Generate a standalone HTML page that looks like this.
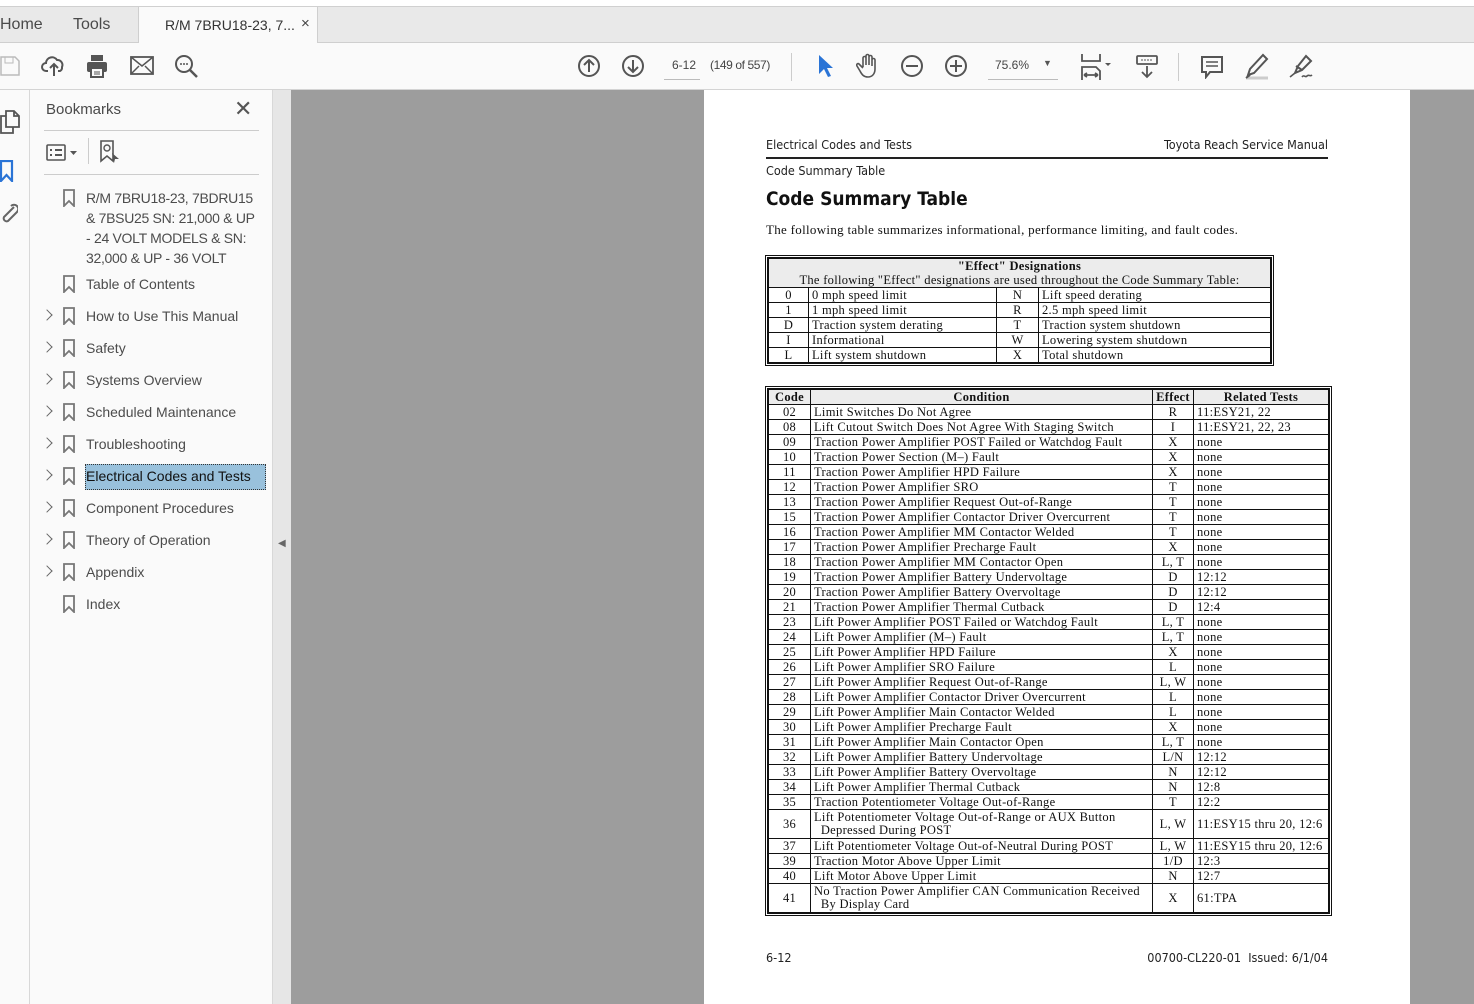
<!DOCTYPE html>
<html><head><meta charset="utf-8">
<style>
*{box-sizing:border-box;margin:0;padding:0}
body{width:1474px;height:1004px;overflow:hidden;background:#9d9d9d;font-family:"Liberation Sans",sans-serif;position:relative}
.abs{position:absolute}
#top{left:0;top:0;width:1474px;height:7px;background:#fff;border-bottom:1px solid #d0d0d0}
#tabs{left:0;top:7px;width:1474px;height:36px;background:#e9e9e9;border-bottom:1px solid #cfcfcf}
.tabt{position:absolute;top:9px;font-size:16px;color:#4a4a4a}
#tab{left:138px;top:7px;width:180px;height:37px;background:#fafafa;border-left:1px solid #cfcfcf;border-right:1px solid #cfcfcf}
#tb{left:0;top:43px;width:1474px;height:47px;background:#fafafa;border-bottom:1px solid #d4d4d4}
svg{position:absolute}
#rail{left:0;top:90px;width:30px;height:914px;background:#fafafa;border-right:1px solid #d8d8d8}
#panel{left:30px;top:90px;width:242px;height:914px;background:#fafafa}
#coll{left:272px;top:90px;width:19px;height:914px;background:#e6e6e6;border-left:1px solid #d8d8d8}
.bm{position:absolute;left:86px;font-size:14px;color:#4c4c4c;line-height:20px;font-family:"Liberation Sans",sans-serif;white-space:nowrap}
.chev{position:absolute;left:43px;width:8px;height:8px;border-right:1.5px solid #666;border-top:1.5px solid #666;transform:rotate(45deg)}
.bi{position:absolute;left:63px}
#page{left:704px;top:90px;width:706px;height:914px;background:#fff}
.s{font-family:"DejaVu Sans Condensed","Liberation Sans Narrow","Liberation Sans",sans-serif}
table{border-collapse:collapse;font-family:"Liberation Serif",serif;font-size:12.5px;letter-spacing:0.3px;table-layout:fixed;color:#111}
td,th{border:1px solid #111;padding:0 3px;height:15px;line-height:13px;white-space:nowrap;overflow:hidden;vertical-align:middle}
.c{text-align:center}
</style></head><body>
<div id="top" class="abs"></div>
<div id="tabs" class="abs">
 <span class="tabt" style="left:0">Home</span>
 <span class="tabt" style="left:73px">Tools</span>
</div>
<div id="tab" class="abs"><span style="position:absolute;left:26px;top:10px;font-size:14px;color:#333">R/M 7BRU18-23, 7...</span><span style="position:absolute;left:162px;top:8px;font-size:15px;color:#444">×</span></div>
<div id="tb" class="abs">
 <svg style="left:0;top:12px" width="20" height="22" viewBox="0 0 20 22"><path d="M1 2h14l4 4v14H1z" fill="none" stroke="#bbb" stroke-width="1.5"/><rect x="5" y="2" width="8" height="6" fill="none" stroke="#bbb"/></svg>
 <svg style="left:41px;top:11px" width="26" height="24" viewBox="0 0 26 24"><path d="M7 17H5a4 4 0 0 1 0-8 6 6 0 0 1 11-3 5 5 0 0 1 5 7 4 4 0 0 1-2 4h-2" fill="none" stroke="#555" stroke-width="2"/><path d="M13 22V11M9 14l4-4 4 4" fill="none" stroke="#555" stroke-width="2"/></svg>
 <svg style="left:86px;top:11px" width="22" height="24" viewBox="0 0 22 24"><rect x="5" y="1" width="12" height="6" fill="#555"/><rect x="1" y="8" width="20" height="10" rx="2" fill="#555"/><rect x="5" y="14" width="12" height="9" fill="#fafafa" stroke="#555" stroke-width="2"/><path d="M8 18h6M8 20h6" stroke="#555"/></svg>
 <svg style="left:130px;top:13px" width="24" height="19" viewBox="0 0 24 19"><rect x="1" y="1" width="22" height="17" fill="none" stroke="#555" stroke-width="1.8"/><path d="M1 1l11 9 11-9M1 18l8-8M23 18l-8-8" fill="none" stroke="#555" stroke-width="1.5"/></svg>
 <svg style="left:174px;top:11px" width="26" height="26" viewBox="0 0 26 26"><circle cx="10" cy="10" r="8" fill="none" stroke="#555" stroke-width="2"/><path d="M16 16l7 7" stroke="#555" stroke-width="2.5"/><circle cx="7" cy="10" r="1" fill="#555"/><circle cx="10" cy="10" r="1" fill="#555"/><circle cx="13" cy="10" r="1" fill="#555"/></svg>
 <svg style="left:577px;top:11px" width="24" height="24" viewBox="0 0 24 24"><circle cx="12" cy="12" r="10" fill="none" stroke="#555" stroke-width="2"/><path d="M12 18V6M7 11l5-5 5 5" fill="none" stroke="#555" stroke-width="2"/></svg>
 <svg style="left:621px;top:11px" width="24" height="24" viewBox="0 0 24 24"><circle cx="12" cy="12" r="10" fill="none" stroke="#555" stroke-width="2"/><path d="M12 6v12M7 13l5 5 5-5" fill="none" stroke="#555" stroke-width="2"/></svg>
 <span class="abs" style="left:672px;top:15px;font-size:12px;color:#444">6-12</span>
 <div class="abs" style="left:664px;top:36px;width:36px;height:1px;background:#bbb"></div>
 <span class="abs" style="left:710px;top:15px;font-size:12px;color:#444;letter-spacing:-0.4px">(149 of 557)</span>
 <div class="abs" style="left:791px;top:10px;width:1px;height:28px;background:#ccc"></div>
 <svg style="left:817px;top:11px" width="16" height="24" viewBox="0 0 16 24"><path d="M2 1v19l5-5 4 8 3-1-4-8h6z" fill="#2a74d6"/></svg>
 <svg style="left:856px;top:10px" width="24" height="26" viewBox="0 0 24 26"><path d="M7 14V5a1.5 1.5 0 0 1 3 0v7V3a1.5 1.5 0 0 1 3 0v9V4a1.5 1.5 0 0 1 3 0v9V7a1.5 1.5 0 0 1 3 0v9c0 5-3 8-7 8s-6-2-8-6l-3-5c-1-2 1-3 2-2l4 4" fill="none" stroke="#555" stroke-width="1.6"/></svg>
 <svg style="left:900px;top:11px" width="24" height="24" viewBox="0 0 24 24"><circle cx="12" cy="12" r="10" fill="none" stroke="#555" stroke-width="2"/><path d="M6 12h12" stroke="#555" stroke-width="2"/></svg>
 <svg style="left:944px;top:11px" width="24" height="24" viewBox="0 0 24 24"><circle cx="12" cy="12" r="10" fill="none" stroke="#555" stroke-width="2"/><path d="M6 12h12M12 6v12" stroke="#555" stroke-width="2"/></svg>
 <span class="abs" style="left:995px;top:15px;font-size:12px;color:#444">75.6%</span>
 <span class="abs" style="left:1043px;top:15px;font-size:9px;color:#555">▼</span>
 <div class="abs" style="left:988px;top:36px;width:70px;height:1px;background:#bbb"></div>
 <svg style="left:1080px;top:10px" width="32" height="28" viewBox="0 0 32 28"><path d="M2 1v7h18V1M2 27v-13h14l4 4v9M4 22h14M4 22l3-2M4 22l3 2M18 22l-3-2M18 22l-3 2" fill="none" stroke="#555" stroke-width="1.8"/><path d="M25 10l3 3 3-3z" fill="#555"/></svg>
 <svg style="left:1136px;top:12px" width="22" height="24" viewBox="0 0 22 24"><rect x="1" y="1" width="20" height="8" rx="1" fill="none" stroke="#555" stroke-width="1.8"/><path d="M5 5h12" stroke="#555" stroke-dasharray="2 1"/><path d="M11 11v11M6 17l5 5 5-5" fill="none" stroke="#555" stroke-width="1.8"/></svg>
 <div class="abs" style="left:1178px;top:10px;width:1px;height:28px;background:#ccc"></div>
 <svg style="left:1200px;top:12px" width="24" height="24" viewBox="0 0 24 24"><path d="M2 2h20v15H10l-4 5v-5H2z" fill="none" stroke="#555" stroke-width="2"/><path d="M6 7h12M6 11h12" stroke="#555" stroke-width="1.6"/></svg>
 <svg style="left:1243px;top:10px" width="28" height="28" viewBox="0 0 28 28"><path d="M20 2l4 4-13 14-6 2 2-6z" fill="none" stroke="#555" stroke-width="2"/><path d="M3 25h22" stroke="#ccc" stroke-width="3"/><path d="M3 25l4-3" stroke="#555" stroke-width="2"/></svg>
 <svg style="left:1288px;top:10px" width="28" height="28" viewBox="0 0 28 28"><path d="M18 3l5 5-9 9-7 3 3-7z M8 13l6 4" fill="none" stroke="#555" stroke-width="2"/><path d="M2 24l5-4M14 24c2-3 3 1 5-1 2-2 3 1 5-1" fill="none" stroke="#555" stroke-width="1.6"/></svg>
</div>

<div id="rail" class="abs">
 <svg style="left:0;top:20px" width="20" height="24" viewBox="0 0 20 24"><path d="M6 1h8l5 5v11H6zM14 1v5h5M6 6H1v17h12v-6" fill="none" stroke="#555" stroke-width="1.8"/></svg>
 <svg style="left:0;top:70px" width="14" height="22" viewBox="0 0 14 22"><path d="M1 1h11v20l-5.5-6L1 21z" fill="none" stroke="#2a74d6" stroke-width="2.2"/></svg>
 <svg style="left:0;top:113px" width="18" height="24" viewBox="0 0 18 24"><path d="M14 4L4 14a3 3 0 0 0 4 4l9-9M11 3a4 4 0 0 1 6 6" fill="none" stroke="#666" stroke-width="2"/></svg>
</div>
<div id="panel" class="abs">
 <span class="abs" style="left:16px;top:11px;font-size:15px;color:#4a4a4a">Bookmarks</span>
 <span class="abs" style="left:204px;top:6px;font-size:22px;color:#555">✕</span>
 <div class="abs" style="left:14px;top:40px;width:215px;height:1px;background:#ccc"></div>
 <svg style="left:16px;top:54px" width="36" height="18" viewBox="0 0 36 18"><rect x="1" y="1" width="18" height="15" rx="1" fill="none" stroke="#555" stroke-width="1.6"/><path d="M4 6h2M9 6h7M4 11h2M9 11h7" stroke="#555" stroke-width="2"/><path d="M24 7h7l-3.5 4z" fill="#555"/></svg>
 <div class="abs" style="left:58px;top:48px;width:1px;height:26px;background:#ccc"></div>
 <svg style="left:69px;top:50px" width="22" height="24" viewBox="0 0 22 24"><path d="M2 1h12v20l-6-5-6 5z" fill="none" stroke="#555" stroke-width="1.6"/><circle cx="8" cy="8" r="3" fill="none" stroke="#555" stroke-width="1.4"/><path d="M13 13l7 6-4 0-1 4z" fill="#555"/></svg>
 <div class="abs" style="left:14px;top:84px;width:215px;height:1px;background:#ccc"></div>
</div>

<svg class="bi" style="top:189px" width="12" height="18" viewBox="0 0 12 18"><path d="M1 1h10v16l-5-5-5 5z" fill="none" stroke="#777" stroke-width="1.8"/></svg>
<div class="bm" style="top:188px;letter-spacing:-0.3px">R/M 7BRU18-23, 7BDRU15<br>&amp; 7BSU25 SN: 21,000 &amp; UP<br>- 24 VOLT MODELS &amp; SN:<br>32,000 &amp; UP - 36 VOLT</div>
<svg class="bi" style="top:275px" width="12" height="18" viewBox="0 0 12 18"><path d="M1 1h10v16l-5-5-5 5z" fill="none" stroke="#777" stroke-width="1.8"/></svg>
<div class="bm" style="top:274px">Table of Contents</div>

<div class="chev" style="top:311px"></div><svg class="bi" style="top:307px" width="12" height="18" viewBox="0 0 12 18"><path d="M1 1h10v16l-5-5-5 5z" fill="none" stroke="#777" stroke-width="1.8"/></svg><div class="bm" style="top:306px">How to Use This Manual</div>
<div class="chev" style="top:343px"></div><svg class="bi" style="top:339px" width="12" height="18" viewBox="0 0 12 18"><path d="M1 1h10v16l-5-5-5 5z" fill="none" stroke="#777" stroke-width="1.8"/></svg><div class="bm" style="top:338px">Safety</div>
<div class="chev" style="top:375px"></div><svg class="bi" style="top:371px" width="12" height="18" viewBox="0 0 12 18"><path d="M1 1h10v16l-5-5-5 5z" fill="none" stroke="#777" stroke-width="1.8"/></svg><div class="bm" style="top:370px">Systems Overview</div>
<div class="chev" style="top:407px"></div><svg class="bi" style="top:403px" width="12" height="18" viewBox="0 0 12 18"><path d="M1 1h10v16l-5-5-5 5z" fill="none" stroke="#777" stroke-width="1.8"/></svg><div class="bm" style="top:402px">Scheduled Maintenance</div>
<div class="chev" style="top:439px"></div><svg class="bi" style="top:435px" width="12" height="18" viewBox="0 0 12 18"><path d="M1 1h10v16l-5-5-5 5z" fill="none" stroke="#777" stroke-width="1.8"/></svg><div class="bm" style="top:434px">Troubleshooting</div>
<div class="chev" style="top:471px"></div><svg class="bi" style="top:467px" width="12" height="18" viewBox="0 0 12 18"><path d="M1 1h10v16l-5-5-5 5z" fill="none" stroke="#777" stroke-width="1.8"/></svg>
<div class="abs" style="left:85px;top:464px;width:181px;height:26px;background:#99c1dc;border:1px dotted #333"></div>
<div class="bm" style="top:466px;color:#111">Electrical Codes and Tests</div>
<div class="chev" style="top:503px"></div><svg class="bi" style="top:499px" width="12" height="18" viewBox="0 0 12 18"><path d="M1 1h10v16l-5-5-5 5z" fill="none" stroke="#777" stroke-width="1.8"/></svg><div class="bm" style="top:498px">Component Procedures</div>
<div class="chev" style="top:535px"></div><svg class="bi" style="top:531px" width="12" height="18" viewBox="0 0 12 18"><path d="M1 1h10v16l-5-5-5 5z" fill="none" stroke="#777" stroke-width="1.8"/></svg><div class="bm" style="top:530px">Theory of Operation</div>
<div class="chev" style="top:567px"></div><svg class="bi" style="top:563px" width="12" height="18" viewBox="0 0 12 18"><path d="M1 1h10v16l-5-5-5 5z" fill="none" stroke="#777" stroke-width="1.8"/></svg><div class="bm" style="top:562px">Appendix</div>
<svg class="bi" style="top:595px" width="12" height="18" viewBox="0 0 12 18"><path d="M1 1h10v16l-5-5-5 5z" fill="none" stroke="#777" stroke-width="1.8"/></svg><div class="bm" style="top:594px">Index</div>

<div id="coll" class="abs"><span style="position:absolute;left:5px;top:448px;font-size:10px;color:#666">◀</span></div>

<div id="page" class="abs">
 <div class="abs s" style="left:62px;top:47px;font-size:12.5px;color:#222">Electrical Codes and Tests</div>
 <div class="abs s" style="right:82px;top:47px;font-size:12.5px;color:#222">Toyota Reach Service Manual</div>
 <div class="abs" style="left:62px;top:67px;width:562px;height:1.5px;background:#222"></div>
 <div class="abs s" style="left:62px;top:73px;font-size:12.5px;color:#222">Code Summary Table</div>
 <div class="abs s" style="left:62px;top:98px;font-size:19px;font-weight:bold;color:#111">Code Summary Table</div>
 <div class="abs" style="left:62px;top:132px;font-size:13px;letter-spacing:0.3px;font-family:'Liberation Serif',serif;color:#111">The following table summarizes informational, performance limiting, and fault codes.</div>

 <div class="abs" style="left:61px;top:165px;border:3px double #111">
 <table style="width:502px">
  <colgroup><col style="width:40px"><col style="width:188px"><col style="width:42px"><col style="width:232px"></colgroup>
  <tr style="background:#ececec"><td colspan="4" class="c" style="height:29px;line-height:14px"><b>"Effect" Designations</b><br>The following "Effect" designations are used throughout the Code Summary Table:</td></tr>
  <tr><td class="c">0</td><td>0 mph speed limit</td><td class="c">N</td><td>Lift speed derating</td></tr>
  <tr><td class="c">1</td><td>1 mph speed limit</td><td class="c">R</td><td>2.5 mph speed limit</td></tr>
  <tr><td class="c">D</td><td>Traction system derating</td><td class="c">T</td><td>Traction system shutdown</td></tr>
  <tr><td class="c">I</td><td>Informational</td><td class="c">W</td><td>Lowering system shutdown</td></tr>
  <tr><td class="c">L</td><td>Lift system shutdown</td><td class="c">X</td><td>Total shutdown</td></tr>
 </table></div>

 <div class="abs" style="left:61px;top:296px;border:3px double #111">
 <table style="width:560px">
  <colgroup><col style="width:42px"><col style="width:342px"><col style="width:41px"><col style="width:135px"></colgroup>
  <tr style="background:#ececec"><th>Code</th><th>Condition</th><th>Effect</th><th>Related Tests</th></tr>
  <tr><td class="c">02</td><td>Limit Switches Do Not Agree</td><td class="c">R</td><td>11:ESY21, 22</td></tr>
  <tr><td class="c">08</td><td>Lift Cutout Switch Does Not Agree With Staging Switch</td><td class="c">I</td><td>11:ESY21, 22, 23</td></tr>
  <tr><td class="c">09</td><td>Traction Power Amplifier POST Failed or Watchdog Fault</td><td class="c">X</td><td>none</td></tr>
  <tr><td class="c">10</td><td>Traction Power Section (M–) Fault</td><td class="c">X</td><td>none</td></tr>
  <tr><td class="c">11</td><td>Traction Power Amplifier HPD Failure</td><td class="c">X</td><td>none</td></tr>
  <tr><td class="c">12</td><td>Traction Power Amplifier SRO</td><td class="c">T</td><td>none</td></tr>
  <tr><td class="c">13</td><td>Traction Power Amplifier Request Out-of-Range</td><td class="c">T</td><td>none</td></tr>
  <tr><td class="c">15</td><td>Traction Power Amplifier Contactor Driver Overcurrent</td><td class="c">T</td><td>none</td></tr>
  <tr><td class="c">16</td><td>Traction Power Amplifier MM Contactor Welded</td><td class="c">T</td><td>none</td></tr>
  <tr><td class="c">17</td><td>Traction Power Amplifier Precharge Fault</td><td class="c">X</td><td>none</td></tr>
  <tr><td class="c">18</td><td>Traction Power Amplifier MM Contactor Open</td><td class="c">L, T</td><td>none</td></tr>
  <tr><td class="c">19</td><td>Traction Power Amplifier Battery Undervoltage</td><td class="c">D</td><td>12:12</td></tr>
  <tr><td class="c">20</td><td>Traction Power Amplifier Battery Overvoltage</td><td class="c">D</td><td>12:12</td></tr>
  <tr><td class="c">21</td><td>Traction Power Amplifier Thermal Cutback</td><td class="c">D</td><td>12:4</td></tr>
  <tr><td class="c">23</td><td>Lift Power Amplifier POST Failed or Watchdog Fault</td><td class="c">L, T</td><td>none</td></tr>
  <tr><td class="c">24</td><td>Lift Power Amplifier (M–) Fault</td><td class="c">L, T</td><td>none</td></tr>
  <tr><td class="c">25</td><td>Lift Power Amplifier HPD Failure</td><td class="c">X</td><td>none</td></tr>
  <tr><td class="c">26</td><td>Lift Power Amplifier SRO Failure</td><td class="c">L</td><td>none</td></tr>
  <tr><td class="c">27</td><td>Lift Power Amplifier Request Out-of-Range</td><td class="c">L, W</td><td>none</td></tr>
  <tr><td class="c">28</td><td>Lift Power Amplifier Contactor Driver Overcurrent</td><td class="c">L</td><td>none</td></tr>
  <tr><td class="c">29</td><td>Lift Power Amplifier Main Contactor Welded</td><td class="c">L</td><td>none</td></tr>
  <tr><td class="c">30</td><td>Lift Power Amplifier Precharge Fault</td><td class="c">X</td><td>none</td></tr>
  <tr><td class="c">31</td><td>Lift Power Amplifier Main Contactor Open</td><td class="c">L, T</td><td>none</td></tr>
  <tr><td class="c">32</td><td>Lift Power Amplifier Battery Undervoltage</td><td class="c">L/N</td><td>12:12</td></tr>
  <tr><td class="c">33</td><td>Lift Power Amplifier Battery Overvoltage</td><td class="c">N</td><td>12:12</td></tr>
  <tr><td class="c">34</td><td>Lift Power Amplifier Thermal Cutback</td><td class="c">N</td><td>12:8</td></tr>
  <tr><td class="c">35</td><td>Traction Potentiometer Voltage Out-of-Range</td><td class="c">T</td><td>12:2</td></tr>
  <tr><td class="c" style="height:29px">36</td><td style="height:29px">Lift Potentiometer Voltage Out-of-Range or AUX Button<br>&nbsp;&nbsp;Depressed During POST</td><td class="c">L, W</td><td style="padding-right:0">11:ESY15 thru 20, 12:6</td></tr>
  <tr><td class="c">37</td><td>Lift Potentiometer Voltage Out-of-Neutral During POST</td><td class="c">L, W</td><td style="padding-right:0">11:ESY15 thru 20, 12:6</td></tr>
  <tr><td class="c">39</td><td>Traction Motor Above Upper Limit</td><td class="c">1/D</td><td>12:3</td></tr>
  <tr><td class="c">40</td><td>Lift Motor Above Upper Limit</td><td class="c">N</td><td>12:7</td></tr>
  <tr><td class="c" style="height:29px">41</td><td style="height:29px">No Traction Power Amplifier CAN Communication Received<br>&nbsp;&nbsp;By Display Card</td><td class="c">X</td><td>61:TPA</td></tr>
 </table></div>

 <div class="abs s" style="left:62px;top:860px;font-size:12.5px;color:#222">6-12</div>
 <div class="abs s" style="right:82px;top:860px;font-size:12.5px;color:#222">00700-CL220-01&nbsp; Issued: 6/1/04</div>
</div>
</body></html>
